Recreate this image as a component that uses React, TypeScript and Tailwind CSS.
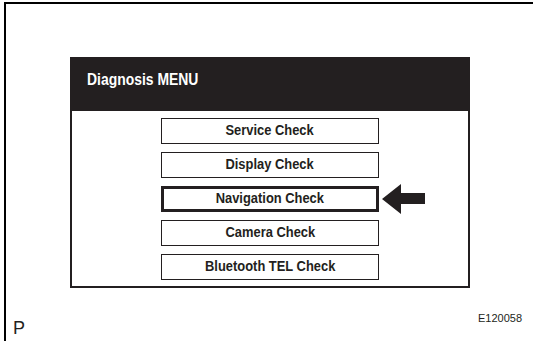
const items = [
  { label: "Service Check", active: false },
  { label: "Display Check", active: false },
  { label: "Navigation Check", active: true },
  { label: "Camera Check", active: false },
  { label: "Bluetooth TEL Check", active: false },
];

// no condensed face installed, so squeeze Liberation Sans a bit
const sans = "font-['Liberation_Sans',Arial,sans-serif]";

const Arrow = () => (
  <svg width="43" height="30" viewBox="0 0 43 30" className="absolute left-full top-1/2 ml-[6px] -translate-y-1/2">
    <path d="M0 15 L19 0 L19 9 L43 9 L43 20 L19 20 L19 30 Z" fill="#231f20" />
  </svg>
);

export default function App() {
  return (
    <div className="h-[341px] w-[533px] overflow-hidden bg-white pl-[4px] pt-[2px]">
      <div className="flex h-[339px] flex-col border-l-2 border-t-2 border-black">
        <div className="ml-[64px] mt-[53px] w-[400px]">
          <div className="h-[54px] bg-[#231f20] pl-[17px] pt-[10px]">
            <span className={`${sans} inline-block origin-left scale-x-[0.87] text-[16px] font-bold leading-[18px] text-white`}>
              Diagnosis MENU
            </span>
          </div>
          <div className="flex flex-col items-center gap-[8px] border-x-2 border-b-2 border-[#231f20] bg-white pb-[6px] pt-[7px]">
            {items.map((it) => (
              <div
                key={it.label}
                className={`relative flex h-[26px] w-[218px] items-center justify-center border-[#231f20] ${
                  it.active ? "border-[3px]" : "border-[1.5px]"
                }`}
              >
                <span className={`${sans} inline-block scale-x-[0.89] whitespace-nowrap text-[14.5px] font-bold text-[#231f20]`}>
                  {it.label}
                </span>
                {it.active && <Arrow />}
              </div>
            ))}
          </div>
        </div>
        <div className="mt-auto flex items-start justify-between pb-[4px] pl-[7px] pr-[11px]">
          <span className={`${sans} mt-[16px] text-[18px] leading-[18px] text-[#231f20]`}>P</span>
          <span className={`${sans} mt-[9px] text-[11px] leading-[12px] text-[#231f20]`}>E120058</span>
        </div>
      </div>
    </div>
  );
}
